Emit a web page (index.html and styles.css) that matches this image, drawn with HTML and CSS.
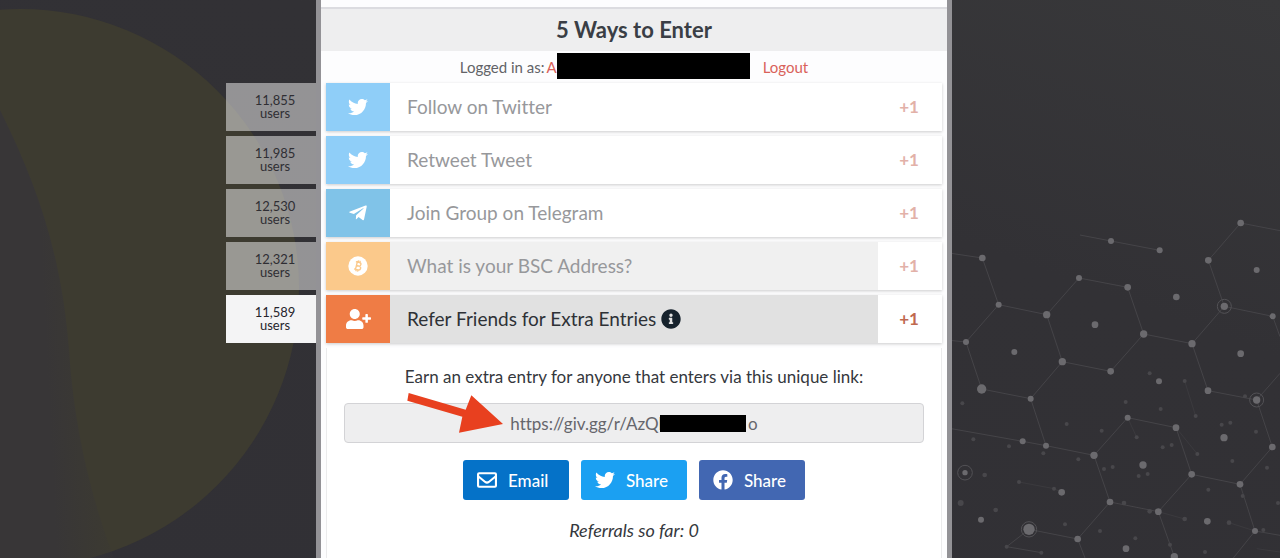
FILE: index.html
```html
<!DOCTYPE html>
<html lang="en">

<head>
    <meta charset="UTF-8">
    <meta name="viewport" content="width=device-width, initial-scale=1.0">
    <title>5 Ways to Enter</title>
    <link rel="stylesheet" href="styles.css">
</head>

<body>
    <!-- Shared icons -->
    <svg class="icon-defs" aria-hidden="true">
        <symbol id="icon-twitter" viewBox="0 0 512 512">
            <path d="M459.4 151.7c.3 4.5.3 9.1.3 13.6 0 138.7-105.6 298.6-298.6 298.6-59.5 0-114.7-17.2-161.1-47.1 8.4 1 16.6 1.3 25.3 1.3 49.1 0 94.2-16.6 130.3-44.8-46.1-1-84.8-31.2-98.1-72.8 6.5 1 13 1.6 19.8 1.6 9.4 0 18.8-1.3 27.6-3.6-48.1-9.7-84.1-52-84.1-103v-1.3c14 7.8 30.2 12.7 47.4 13.3-28.3-18.8-46.8-51-46.8-87.4 0-19.5 5.2-37.4 14.3-53 51.7 63.7 129.3 105.3 216.4 109.8-1.6-7.8-2.6-15.9-2.6-24 0-57.8 46.8-104.9 104.9-104.9 30.2 0 57.5 12.7 76.7 33.1 23.7-4.5 46.5-13.3 66.6-25.3-7.8 24.4-24.4 44.8-46.1 57.8 21.1-2.3 41.6-8.1 60.4-16.2-14.3 20.8-32.2 39.3-52.6 54.3z" />
        </symbol>
        <symbol id="icon-telegram" viewBox="0 0 448 512">
            <path d="M446.700 98.600l-67.600 318.800c-5.100 22.500-18.400 28.100-37.300 17.500l-103-75.900-49.700 47.800c-5.500 5.500-10.100 10.100-20.700 10.100l7.400-104.900 190.900-172.500c8.300-7.400-1.800-11.500-12.900-4.100L117.800 284 16.200 252.200c-22.100-6.900-22.500-22.100 4.600-32.700L418.200 66.400c18.400-6.900 34.500 4.100 28.500 32.200z" />
        </symbol>
        <symbol id="icon-bitcoin" viewBox="0 0 512 512">
            <circle cx="256" cy="256" r="248" />
            <g fill="none" stroke="#fbc98b" stroke-width="34" transform="rotate(14 256 256)">
                <path d="M176 160h94c66 0 66 92 0 92h-62M208 252h72c74 0 74 100 0 100H176M214 160v192M234 112v48M280 112v48M234 352v48M280 352v48" />
            </g>
        </symbol>
        <symbol id="icon-user-plus" viewBox="0 0 640 512">
            <path d="M624 208h-64v-64c0-8.800-7.200-16-16-16h-32c-8.800 0-16 7.200-16 16v64h-64c-8.800 0-16 7.200-16 16v32c0 8.800 7.200 16 16 16h64v64c0 8.800 7.200 16 16 16h32c8.800 0 16-7.200 16-16v-64h64c8.800 0 16-7.200 16-16v-32c0-8.800-7.200-16-16-16zM224 256c70.700 0 128-57.300 128-128S294.700 0 224 0 96 57.300 96 128s57.300 128 128 128zm89.600 32h-16.700c-22.200 10.200-46.900 16-72.900 16s-50.600-5.800-72.900-16h-16.700C60.200 288 0 348.200 0 422.400V464c0 26.500 21.500 48 48 48h352c26.500 0 48-21.500 48-48v-41.600c0-74.200-60.200-134.400-134.400-134.400z" />
        </symbol>
        <symbol id="icon-info" viewBox="0 0 512 512">
            <path d="M256 8C119 8 8 119 8 256s111 248 248 248 248-111 248-248S393 8 256 8zm0 110c23.200 0 42 18.800 42 42s-18.800 42-42 42-42-18.800-42-42 18.800-42 42-42zm56 254c0 6.600-5.400 12-12 12h-88c-6.600 0-12-5.400-12-12v-24c0-6.600 5.400-12 12-12h12v-64h-12c-6.600 0-12-5.400-12-12v-24c0-6.600 5.400-12 12-12h64c6.600 0 12 5.400 12 12v100h12c6.600 0 12 5.400 12 12v24z" />
        </symbol>
        <symbol id="icon-envelope" viewBox="0 0 512 512">
            <g fill="none" stroke="currentColor" stroke-width="54">
                <rect x="27" y="83" width="458" height="346" rx="26" />
                <path d="M30 160l180 146c30 22 62 22 92 0l180-146" />
            </g>
        </symbol>
        <symbol id="icon-facebook" viewBox="0 0 512 512">
            <path d="M504 256C504 119 393 8 256 8S8 119 8 256c0 123.800 90.700 226.400 209.300 245V327.700h-63V256h63v-54.600c0-62.200 37-96.500 93.700-96.500 27.100 0 55.500 4.800 55.500 4.800v61h-31.300c-30.800 0-40.400 19.100-40.400 38.700V256h68.800l-11 71.700h-57.800V501C413.300 482.400 504 379.800 504 256z" />
        </symbol>
    </svg>

    <!-- Background art -->
    <svg class="bg-circle" viewBox="0 0 320 558" aria-hidden="true">
        <defs>
            <linearGradient id="shade" x1="0" y1="0.6" x2="1" y2="0.4">
                <stop offset="0.4" stop-color="#383637" />
                <stop offset="1" stop-color="#383637" stop-opacity="0" />
            </linearGradient>
        </defs>
        <circle cx="20" cy="288" r="279" fill="#3d3b30" />
        <path d="M0 110C40 190 62 260 69 350C74 430 92 500 114 558H0z" fill="url(#shade)" />
    </svg>
    <svg class="bg-network" viewBox="0 0 1020 1074" aria-hidden="true">
        <g class="net-lines">
            <path d="M0 155L127 174L176 314L320 344L367 485L512 514L611 402L563 262L417 234L320 344M176 314L78 426L125 567L272 596L367 485M78 426L0 418" />
            <path d="M272 596L318 737L462 766L510 906L655 935L755 823L900 853L997 741L950 600L804 572L756 431L611 402M756 431L853 319L805 181L902 69L1020 92M853 319L998 349L1020 410M950 600L1020 520" />
            <path d="M0 680L248 724L318 737M462 766L563 653L708 683L755 823M510 906L413 1017L267 988L200 1040L304 1058M413 1017L435 1074M655 935L703 1070M900 853L945 993L1020 1006M945 993L880 1074M420 105L513 123L659 151" />
            <path class="faint" d="M237 846L342 866L365 877M655 935L734 957M563 653L590 712M734 543L767 648M708 683L772 762M867 968L945 993M950 1046L1020 1056" />
        </g>
        <g class="net-nodes">
            <circle cx="127" cy="174" r="10" /><circle cx="176" cy="314" r="9" /><circle cx="320" cy="344" r="11" />
            <circle cx="417" cy="234" r="9" /><circle cx="563" cy="262" r="10" /><circle cx="513" cy="123" r="9" />
            <circle cx="659" cy="151" r="9" /><circle cx="709" cy="291" r="10" /><circle cx="611" cy="402" r="11" />
            <circle cx="465" cy="374" r="10" /><circle cx="367" cy="485" r="11" /><circle cx="512" cy="514" r="10" />
            <circle cx="78" cy="426" r="9" /><circle cx="223" cy="456" r="9" /><circle cx="125" cy="567" r="14" />
            <circle cx="272" cy="596" r="9" /><circle cx="902" cy="69" r="10" /><circle cx="805" cy="181" r="10" />
            <circle cx="950" cy="210" r="9" /><circle cx="853" cy="319" r="11" /><circle cx="998" cy="349" r="9" />
            <circle cx="756" cy="431" r="11" /><circle cx="902" cy="461" r="10" /><circle cx="804" cy="572" r="10" />
            <circle cx="950" cy="600" r="11" /><circle cx="657" cy="544" r="9" /><circle cx="563" cy="653" r="9" />
            <circle cx="708" cy="683" r="10" /><circle cx="852" cy="713" r="11" /><circle cx="997" cy="741" r="10" />
            <circle cx="248" cy="724" r="9" /><circle cx="318" cy="737" r="9" /><circle cx="462" cy="766" r="11" />
            <circle cx="609" cy="795" r="11" /><circle cx="755" cy="823" r="10" /><circle cx="900" cy="853" r="10" />
            <circle cx="365" cy="877" r="10" /><circle cx="510" cy="906" r="10" /><circle cx="655" cy="935" r="10" />
            <circle cx="802" cy="964" r="10" /><circle cx="945" cy="993" r="9" /><circle cx="267" cy="988" r="17" />
            <circle cx="413" cy="1017" r="10" /><circle cx="558" cy="1046" r="10" /><circle cx="703" cy="1070" r="11" />
            <circle cx="75" cy="818" r="8" /><circle cx="123" cy="959" r="9" />
        </g>
        <g class="net-dust">
            <circle cx="67" cy="610" r="6" /><circle cx="380" cy="672" r="6" /><circle cx="485" cy="692" r="6" />
            <circle cx="557" cy="606" r="6" /><circle cx="629" cy="520" r="6" /><circle cx="734" cy="543" r="6" />
            <circle cx="662" cy="627" r="6" /><circle cx="767" cy="648" r="6" /><circle cx="590" cy="712" r="6" />
            <circle cx="668" cy="742" r="6" /><circle cx="695" cy="735" r="6" /><circle cx="772" cy="762" r="6" />
            <circle cx="845" cy="674" r="6" /><circle cx="871" cy="668" r="6" /><circle cx="915" cy="589" r="6" />
            <circle cx="948" cy="695" r="6" /><circle cx="877" cy="783" r="6" /><circle cx="981" cy="803" r="6" />
            <circle cx="100" cy="718" r="6" /><circle cx="207" cy="739" r="6" /><circle cx="310" cy="760" r="6" />
            <circle cx="415" cy="778" r="6" /><circle cx="492" cy="807" r="6" /><circle cx="518" cy="801" r="6" />
            <circle cx="596" cy="828" r="6" /><circle cx="623" cy="822" r="6" /><circle cx="134" cy="825" r="7" />
            <circle cx="237" cy="846" r="6" /><circle cx="342" cy="866" r="6" /><circle cx="62" cy="909" r="9" />
            <circle cx="167" cy="930" r="7" /><circle cx="375" cy="973" r="6" /><circle cx="480" cy="993" r="6" />
            <circle cx="552" cy="909" r="7" /><circle cx="629" cy="934" r="7" /><circle cx="734" cy="957" r="7" />
            <circle cx="805" cy="869" r="6" /><circle cx="908" cy="888" r="6" /><circle cx="867" cy="968" r="7" />
            <circle cx="970" cy="990" r="6" /><circle cx="1014" cy="909" r="6" /><circle cx="586" cy="1015" r="6" />
            <circle cx="690" cy="1034" r="6" /><circle cx="795" cy="1056" r="6" /><circle cx="200" cy="1040" r="6" />
            <circle cx="304" cy="1058" r="6" />
        </g>
        <g class="net-rings">
            <circle cx="853" cy="319" r="21" /><circle cx="950" cy="600" r="21" />
            <circle cx="75" cy="818" r="22" /><circle cx="267" cy="988" r="23" />
        </g>
    </svg>

    <div class="page">
        <div class="counts">
            <div class="count">11,855<br>users</div>
            <div class="count">11,985<br>users</div>
            <div class="count">12,530<br>users</div>
            <div class="count">12,321<br>users</div>
            <div class="count active">11,589<br>users</div>
        </div>

        <main class="widget">
            <h1 class="widget-title">5 Ways to Enter</h1>
            <div class="login">
                <span>Logged in as:</span>
                <a href="#">A</a><span class="redacted"></span>
                <a class="logout" href="#">Logout</a>
            </div>

            <div class="entries">
                <button class="entry done" type="button">
                    <span class="entry-icon twitter"><svg class="icon"><use href="#icon-twitter" /></svg></span>
                    <span class="entry-text">Follow on Twitter</span>
                    <span class="entry-value">+1</span>
                </button>
                <button class="entry done" type="button">
                    <span class="entry-icon twitter"><svg class="icon"><use href="#icon-twitter" /></svg></span>
                    <span class="entry-text">Retweet Tweet</span>
                    <span class="entry-value">+1</span>
                </button>
                <button class="entry done" type="button">
                    <span class="entry-icon telegram"><svg class="icon"><use href="#icon-telegram" /></svg></span>
                    <span class="entry-text">Join Group on Telegram</span>
                    <span class="entry-value">+1</span>
                </button>
                <button class="entry done shaded" type="button">
                    <span class="entry-icon bitcoin"><svg class="icon"><use href="#icon-bitcoin" /></svg></span>
                    <span class="entry-text">What is your BSC Address?</span>
                    <span class="entry-value">+1</span>
                </button>
                <button class="entry open" type="button">
                    <span class="entry-icon refer"><svg class="icon wide"><use href="#icon-user-plus" /></svg></span>
                    <span class="entry-text">Refer Friends for Extra Entries <svg class="icon info"><use href="#icon-info" /></svg></span>
                    <span class="entry-value">+1</span>
                </button>
            </div>

            <section class="refer-panel">
                <label class="refer-label" for="referLink">Earn an extra entry for anyone that enters via this unique link:</label>
                <div class="link-field">
                    <input type="text" id="referLink" readonly value="https://giv.gg/r/AzQl&emsp;&emsp;&emsp;&emsp;&emsp;&nbsp;&nbsp;&nbsp;&nbsp;&nbsp;o">
                    <span class="link-mask"></span>
                    <svg class="arrow" viewBox="0 0 288 120" aria-hidden="true">
                        <path d="M5 0L176 50L193 7L288 93L156 119L166 71L1 23z" fill="#e8401f" />
                    </svg>
                </div>
                <div class="share">
                    <button class="share-btn email" type="button"><svg class="icon"><use href="#icon-envelope" /></svg>Email</button>
                    <button class="share-btn tweet" type="button"><svg class="icon"><use href="#icon-twitter" /></svg>Share</button>
                    <button class="share-btn facebook" type="button"><svg class="icon"><use href="#icon-facebook" /></svg>Share</button>
                </div>
                <p class="referrals">Referrals so far: 0</p>
            </section>
        </main>
    </div>
</body>

</html>
```
FILE: styles.css
```css
* {
    box-sizing: border-box;
}

body {
    margin: 0;
    min-height: 100vh;
    position: relative;
    overflow: hidden;
    font-family: Lato, "Liberation Sans", sans-serif;
    font-variant-ligatures: none;
    color: #35383d;
    background: linear-gradient(200deg, #38383a 0%, #323135 35%, #313035 100%);
}

button,
input {
    font-family: inherit;
    font-variant-ligatures: none;
}

a {
    color: #d9625a;
    text-decoration: none;
}

.icon-defs {
    position: absolute;
    width: 0;
    height: 0;
}

.icon {
    width: 20px;
    height: 20px;
    fill: currentColor;
    flex: none;
}

/* background */
.bg-circle {
    position: absolute;
    top: 0;
    left: 0;
    width: 320px;
    height: 558px;
}

.bg-network {
    position: absolute;
    right: 0;
    bottom: 0;
    width: 340px;
    height: 358px;
}

.net-lines {
    fill: none;
    stroke: #454448;
    stroke-width: 3;
}

.net-lines .faint {
    stroke: #3b3a3e;
}

.net-nodes {
    fill: #6b6a6e;
}

.net-dust {
    fill: #48474b;
}

.net-rings {
    fill: none;
    stroke: #525155;
    stroke-width: 3;
}

/* layout */
.page {
    position: relative;
    display: flex;
    justify-content: center;
    min-height: 100vh;
    padding-right: 12px;
}

.counts {
    display: flex;
    flex-direction: column;
    gap: 5px;
    width: 90px;
    margin-left: -90px;
    padding-top: 83px;
}

.count {
    height: 48px;
    padding: 11px 0 0 8px;
    font-size: 13px;
    line-height: 13px;
    text-align: center;
    color: #2f2e33;
    background: rgba(255, 255, 255, 0.48);
}

.count.active {
    color: #26242c;
    background: #f4f4f5;
}

.widget {
    width: 100%;
    max-width: 636px;
    border: solid #939296;
    border-width: 0 5px;
    padding-top: 7px;
    background: #fdfdfe;
}

.widget-title {
    margin: 0;
    height: 44px;
    border-top: 2px solid #dcdce0;
    font-size: 22px;
    line-height: 42px;
    font-weight: 700;
    text-align: center;
    color: #3a3e45;
    background: #eeeeef;
}

.login {
    display: flex;
    align-items: center;
    justify-content: center;
    height: 32px;
    font-size: 15px;
    color: #626367;
}

.login span + a {
    margin-left: 2px;
}

.redacted {
    width: 193px;
    height: 26px;
    margin-top: -3px;
    background: #000;
}

.login .logout {
    margin-left: 13px;
}

/* entry rows */
.entries {
    display: flex;
    flex-direction: column;
    gap: 5px;
    padding: 0 5px;
}

.entry {
    display: flex;
    width: 100%;
    height: 48px;
    padding: 0;
    border: none;
    font-size: 19px;
    text-align: left;
    color: #2e3136;
    background: #fff;
    box-shadow: 0 1px 3px rgba(0, 0, 0, 0.2);
    cursor: pointer;
}

.entry-icon {
    display: flex;
    align-items: center;
    justify-content: center;
    width: 64px;
    color: #fff;
}

.entry-icon .icon.wide {
    width: 25px;
}

.twitter {
    background: #8fcef8;
}

.telegram {
    background: #80c3e8;
}

.bitcoin {
    background: #fbc98b;
}

.refer {
    background: #ef7c45;
}

.entry-text {
    flex: 1;
    padding-left: 17px;
    line-height: 48px;
}

.entry-value {
    width: 64px;
    padding-right: 2px;
    font-size: 17px;
    font-weight: 700;
    line-height: 48px;
    text-align: center;
    color: #c0694f;
    background: #fff;
}

.done .entry-text {
    color: #97989b;
}

.done .entry-value {
    color: #e2b1a8;
}

.shaded .entry-text {
    background: #f0f0f0;
}

.open .entry-text {
    background: #e1e1e1;
}

.info {
    color: #16222c;
    vertical-align: -3px;
}

/* refer friends */
.refer-panel {
    display: flex;
    flex-direction: column;
    align-items: center;
    margin: 5px 5px 0;
    padding: 18px 17px 0;
    min-height: 210px;
    border: solid #ebebec;
    border-width: 0 1px;
    background: #fff;
}

.refer-label {
    font-size: 17px;
    line-height: 22px;
}

.link-field {
    position: relative;
    width: 100%;
    margin: 15px 0 17px;
}

.link-field input {
    display: block;
    width: 100%;
    height: 40px;
    border: 1px solid #d3d3d6;
    border-radius: 4px;
    font-size: 17px;
    text-align: center;
    color: #66666c;
    background: #eeeeef;
}

/* bar over the private part of the link */
.link-mask {
    position: absolute;
    top: 12px;
    left: calc(50% + 26px);
    width: 86px;
    height: 17px;
    background: #000;
}

.arrow {
    position: absolute;
    top: -10px;
    right: calc(50% + 131px);
    width: 96px;
    height: 40px;
}

.share {
    display: flex;
    gap: 12px;
}

.share-btn {
    display: flex;
    align-items: center;
    gap: 11px;
    width: 106px;
    height: 40px;
    padding: 0 14px;
    border: none;
    border-radius: 3px;
    font-size: 17px;
    font-weight: 500;
    color: #fff;
    cursor: pointer;
}

.email {
    background: #0572c8;
}

.tweet {
    background: #1ba0f2;
}

.facebook {
    background: #4267b2;
}

.referrals {
    margin: 19px 0 0;
    font-size: 18px;
    line-height: 22px;
    font-style: italic;
}
```
